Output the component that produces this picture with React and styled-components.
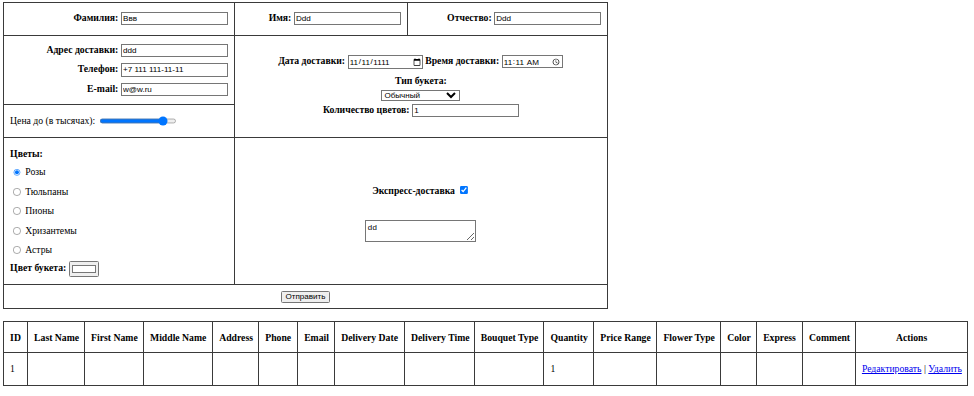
import React from "react";
import styled, { createGlobalStyle } from "styled-components";

const GlobalStyle = createGlobalStyle`
  body {
    margin: 0;
    background: #fff;
    color: #000;
    font-family: "Liberation Serif", "Times New Roman", serif;
  }
  input, select, button {
    font-family: "Liberation Sans", Arial, sans-serif;
    font-size: 13.33px;
  }
`;

// the whole page is a default-styled html page shown at a reduced zoom
const Page = styled.div`
  zoom: 0.607;
  padding: 3px 5px;
  font-size: 16px;
`;

const FormTable = styled.table`
  border-collapse: collapse;
  table-layout: fixed;
  width: 995px;
`;

const FormRow = styled.tr`
  height: ${(p) => p.$h}px;
`;

const FormCell = styled.td`
  box-sizing: border-box;
  border: 1px solid #3a3a3a;
  padding: ${(p) => p.$pt || 0}px 10px 0;
  text-align: ${(p) => p.$align || "left"};
  vertical-align: middle;
  width: ${(p) => (p.$w ? `${p.$w}px` : "auto")};
`;

const Label = styled.label`
  font-weight: bold;
`;

const Line = styled.div`
  margin-bottom: ${(p) => p.$mb || 0}px;
`;

const TextInput = styled.input`
  width: 176px;
  box-sizing: border-box;
  height: 22px;
`;

const DateInput = styled.input`
  width: ${(p) => p.$w}px;
  box-sizing: border-box;
  height: 22px;
`;

const Select = styled.select`
  width: 130px;
`;

const Range = styled.input`
  vertical-align: middle;
`;

const Radios = styled.div`
  display: flex;
  flex-direction: column;
  gap: 14px;
  margin: 12px 0 10px;
`;

const RadioRow = styled.div`
  display: flex;
  align-items: center;
  gap: 4px;
`;

const ColorInput = styled.input`
  vertical-align: middle;
`;

const Comment = styled.textarea`
  margin-top: 41px;
  width: 183px;
  height: 35px;
  box-sizing: border-box;
  font-family: "Liberation Mono", monospace;
  font-size: 13.33px;
`;

const DataTable = styled.table`
  margin-top: 20px;
  border-collapse: collapse;
  table-layout: fixed;
  width: 1590px;
`;

const Th = styled.th`
  box-sizing: border-box;
  border: 1px solid #3a3a3a;
  padding: 0 10px;
  height: 50px;
  width: ${(p) => p.$w}px;
  font-weight: bold;
  text-align: center;
  white-space: nowrap;
`;

const Td = styled.td`
  box-sizing: border-box;
  border: 1px solid #3a3a3a;
  padding: 0 10px;
  height: 55px;
  white-space: nowrap;
`;

const ActionLink = styled.a`
  color: #0000ee;
  text-decoration: underline;
`;

const flowers = ["Розы", "Тюльпаны", "Пионы", "Хризантемы", "Астры"];

const columns = [
  ["ID", 39.5],
  ["Last Name", 94],
  ["First Name", 97],
  ["Middle Name", 114],
  ["Address", 76],
  ["Phone", 64],
  ["Email", 61],
  ["Delivery Date", 115],
  ["Delivery Time", 115],
  ["Bouquet Type", 115],
  ["Quantity", 82],
  ["Price Range", 104],
  ["Flower Type", 105],
  ["Color", 59],
  ["Express", 76],
  ["Comment", 87],
  ["Actions", 185.5],
];

const row = { ID: "1", Quantity: "1" };

const App = () => {
  return (
    <>
      <GlobalStyle />
      <Page>
        <FormTable>
          <tbody>
            <FormRow $h={54}>
              <FormCell $w={380} $align="right">
                <Label>Фамилия:</Label> <TextInput defaultValue="Ввв" />
              </FormCell>
              <FormCell $w={285} $align="right">
                <Label>Имя:</Label> <TextInput defaultValue="Ddd" />
              </FormCell>
              <FormCell $w={330} $align="right">
                <Label>Отчество:</Label> <TextInput defaultValue="Ddd" />
              </FormCell>
            </FormRow>
            <FormRow $h={115}>
              <FormCell $align="right">
                <Line $mb={10}>
                  <Label>Адрес доставки:</Label> <TextInput defaultValue="ddd" />
                </Line>
                <Line $mb={10}>
                  <Label>Телефон:</Label> <TextInput defaultValue="+7 111 111-11-11" />
                </Line>
                <Line>
                  <Label>E-mail:</Label> <TextInput defaultValue="w@w.ru" />
                </Line>
              </FormCell>
              <FormCell colSpan={2} rowSpan={2} $align="center">
                <Line $mb={10}>
                  <Label>Дата доставки:</Label>{" "}
                  <DateInput type="date" $w={124} defaultValue="1111-11-11" />{" "}
                  <Label>Время доставки:</Label>{" "}
                  <DateInput type="time" $w={102} defaultValue="11:11" />
                </Line>
                <Line $mb={5}>
                  <Label>Тип букета:</Label>
                </Line>
                <Line $mb={5}>
                  <Select defaultValue="Обычный">
                    <option>Обычный</option>
                    <option>Свадебный</option>
                    <option>Праздничный</option>
                  </Select>
                </Line>
                <Line>
                  <Label>Количество цветов:</Label> <TextInput defaultValue="1" />
                </Line>
              </FormCell>
            </FormRow>
            <FormRow $h={53}>
              <FormCell>
                Цена до (в тысячах): <Range type="range" min="0" max="100" defaultValue="86" />
              </FormCell>
            </FormRow>
            <FormRow $h={243}>
              <FormCell $pt={6}>
                <Label>Цветы:</Label>
                <Radios>
                  {flowers.map((f, i) => (
                    <RadioRow key={f}>
                      <input type="radio" name="flower" defaultChecked={i === 0} />
                      <label>{f}</label>
                    </RadioRow>
                  ))}
                </Radios>
                <Label>Цвет букета:</Label> <ColorInput type="color" defaultValue="#ffffff" />
              </FormCell>
              <FormCell colSpan={2} $align="center" $pt={10}>
                <div>
                  <Label>Экспресс-доставка</Label> <input type="checkbox" defaultChecked />
                </div>
                <Comment defaultValue="dd" />
              </FormCell>
            </FormRow>
            <FormRow $h={40}>
              <FormCell colSpan={3} $align="center">
                <button type="button">Отправить</button>
              </FormCell>
            </FormRow>
          </tbody>
        </FormTable>

        <DataTable>
          <thead>
            <tr>
              {columns.map(([name, w]) => (
                <Th key={name} $w={w}>
                  {name}
                </Th>
              ))}
            </tr>
          </thead>
          <tbody>
            <tr>
              {columns.map(([name]) =>
                name === "Actions" ? (
                  <Td key={name}>
                    <ActionLink href="#">Редактировать</ActionLink> |{" "}
                    <ActionLink href="#">Удалить</ActionLink>
                  </Td>
                ) : (
                  <Td key={name}>{row[name] || ""}</Td>
                )
              )}
            </tr>
          </tbody>
        </DataTable>
      </Page>
    </>
  );
};

export default App;
